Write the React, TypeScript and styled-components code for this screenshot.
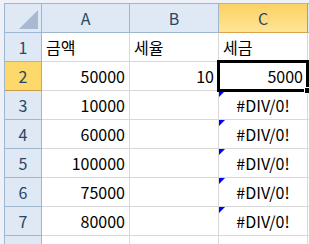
import React from 'react';
import styled, { createGlobalStyle, css } from 'styled-components';

const GlobalStyle = createGlobalStyle`
  html, body {
    margin: 0;
    padding: 0;
    background: #eef2f8;
    overflow: hidden;
  }
`;

const Sheet = styled.div`
  width: 309px;
  height: 244px;
  padding: 3px 0 0 4px;
  box-sizing: border-box;
  background: #eef2f8;
  overflow: hidden;
`;

const Grid = styled.div`
  display: grid;
  grid-template-columns: 37px 88px 89px 89px 1fr;
  grid-auto-rows: 29px;
  border-top: 1px solid #9eb6ce;
  border-left: 1px solid #9eb6ce;
  background: #ffffff;
  font-family: 'Noto Sans CJK KR', 'Noto Sans', sans-serif;
  font-size: 16px;
  color: #000;
`;

const HeaderCell = styled.div<{ $selected?: boolean }>`
  display: flex;
  align-items: center;
  justify-content: center;
  box-sizing: border-box;
  background: #dfe8f5;
  border-right: 1px solid #9eb6ce;
  border-bottom: 1px solid #9eb6ce;
  color: #2b4562;
  font-size: 16px;
  ${(p) =>
    p.$selected &&
    css`
      background: linear-gradient(#fbd164, #ffe596);
      border-right-color: #c99a45;
      border-bottom-color: #d9a44a;
    `}
`;

const RowHeader = styled(HeaderCell)`
  ${(p) =>
    p.$selected &&
    css`
      background: #fdd86a;
      border-right-color: #d9a44a;
      border-bottom-color: #c99a45;
    `}
`;

const Corner = styled(HeaderCell)`
  justify-content: flex-end;
  align-items: flex-end;
  padding: 0 3px 3px 0;
`;

const Cell = styled.div<{ $align?: 'left' | 'right' | 'center' }>`
  position: relative;
  display: flex;
  align-items: center;
  box-sizing: border-box;
  padding: 0 4px;
  border-right: 1px solid #d8d8d8;
  border-bottom: 1px solid #d8d8d8;
  white-space: nowrap;
  justify-content: ${(p) =>
    p.$align === 'right' ? 'flex-end' : p.$align === 'center' ? 'center' : 'flex-start'};
`;

const ErrorMark = styled.span`
  position: absolute;
  top: 0;
  left: 0;
  width: 0;
  height: 0;
  border-top: 6px solid #0000ff;
  border-right: 6px solid transparent;
`;

const Selection = styled.span`
  position: absolute;
  top: -2px;
  left: -2px;
  right: -2px;
  bottom: -2px;
  border: 3px solid #000;
  box-sizing: border-box;
  z-index: 2;
  pointer-events: none;
`;

const FillHandle = styled.span`
  position: absolute;
  right: -4px;
  bottom: -4px;
  width: 5px;
  height: 5px;
  background: #000;
  border: 1px solid #fff;
  z-index: 3;
`;

const rows: { a: string; b: string; c: string; error?: boolean }[] = [
  { a: '금액', b: '세율', c: '세금' },
  { a: '50000', b: '10', c: '5000' },
  { a: '10000', b: '', c: '#DIV/0!', error: true },
  { a: '60000', b: '', c: '#DIV/0!', error: true },
  { a: '100000', b: '', c: '#DIV/0!', error: true },
  { a: '75000', b: '', c: '#DIV/0!', error: true },
  { a: '80000', b: '', c: '#DIV/0!', error: true },
];

const App: React.FC = () => {
  return (
    <>
      <GlobalStyle />
      <Sheet>
        <Grid>
          <Corner>
            <svg width="19" height="19" viewBox="0 0 19 19">
              <polygon points="19,0 19,19 0,19" fill="#a9b9d1" />
            </svg>
          </Corner>
          <HeaderCell>A</HeaderCell>
          <HeaderCell>B</HeaderCell>
          <HeaderCell $selected>C</HeaderCell>
          <HeaderCell />

          {rows.map((row, i) => {
            const n = i + 1;
            const isHeadRow = i === 0;
            return (
              <React.Fragment key={n}>
                <RowHeader $selected={n === 2}>{n}</RowHeader>
                <Cell $align={isHeadRow ? 'left' : 'right'}>{row.a}</Cell>
                <Cell $align={isHeadRow ? 'left' : 'right'}>{row.b}</Cell>
                <Cell $align={isHeadRow ? 'left' : row.error ? 'center' : 'right'}>
                  {row.error && <ErrorMark />}
                  {row.c}
                  {n === 2 && (
                    <>
                      <Selection />
                      <FillHandle />
                    </>
                  )}
                </Cell>
                <Cell />
              </React.Fragment>
            );
          })}

          {/* row 8 is only partly in view, its number falls below the edge */}
          <RowHeader />
          <Cell />
          <Cell />
          <Cell />
          <Cell />
        </Grid>
      </Sheet>
    </>
  );
};

export default App;
